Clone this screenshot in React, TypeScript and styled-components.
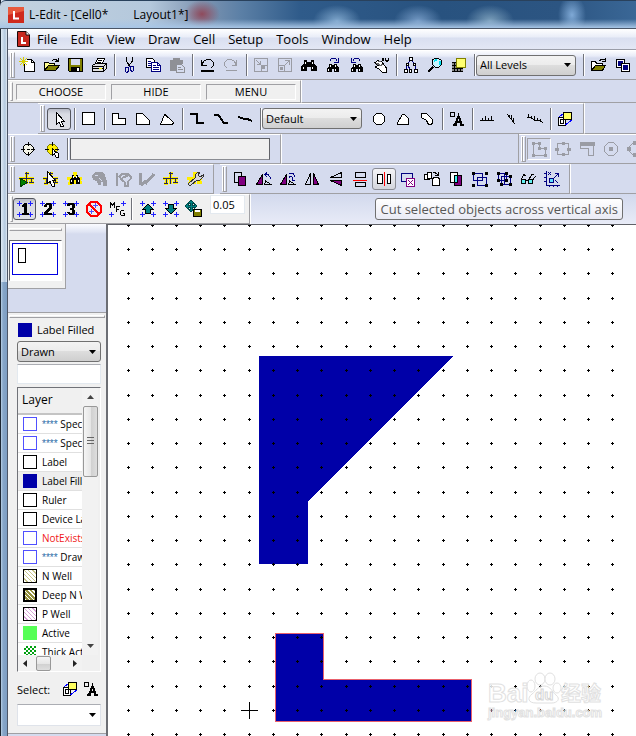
import React from "react";
import styled, { createGlobalStyle, css } from "styled-components";

const face = "#d5dbee";
const panel = "#f0f0f0";
const navy = "#0000a8";
const ui = '"Open Sans", "Noto Sans", "Noto Sans CJK SC", sans-serif';

const Global = createGlobalStyle`
  * { box-sizing: border-box; }
  body { margin: 0; background: ${face}; font-family: ${ui}; color: #000; overflow: hidden; }
  button, input, select { font: inherit; color: inherit; margin: 0; }
`;

/* ---------- icons ---------- */

type Part = [d: string, fill?: string, stroke?: string, width?: number];

const Svg = styled.svg`
  display: block;
  flex: none;
`;

const K = "#000";
const N = "none";
const G = "#9a9ca4";
const OL = "#808000";
const BL = "#000080";
const PU = "#800080";
const net: Part[] = [
  ["M1 8.5H16M8.5 2V14M4.5 8V14M13.5 8V13M7 3.5H11M2 13.5H6M11 12.5H16", N, "#ffee00", 3],
  ["M1 8.5H16M8.5 2V14M4.5 8V14M13.5 8V13M7 3.5H11M2 13.5H6M11 12.5H16", N, "#23235c", 1],
];
const plus4: Part[] = [["M1 3.5H6M3.5 1V6M12 3.5H17M14.5 1V6M1 14.5H6M3.5 12V17M12 14.5H17M14.5 12V17", N, "#2020ff", 1]];
const binoc: Part[] = [
  ["M4 4H7V6H11V4H14V7L17 11V15H11V11H7V15H1V11L4 7Z", K],
  ["M3 11H4V13H3ZM12 11H13V13H12ZM5 6H6V8H5ZM12 6H13V8H12Z", "#fff"],
];
const smallBinoc: Part[] = [
  ["M5 8H8V9H10V8H13V10L15 12V16H10V13H8V16H3V12L5 10Z", K],
  ["M4 13H5V15H4ZM11 13H12V15H11ZM6 9H7V11H6ZM11 9H12V11H11Z", "#fff"],
];
const wrench: Part = ["M4 16L2 14L9 8V5L12 2H14L12 5L14 7L17 5V7L14 10H11Z", "#d8d8d8", "#333", 1];

const icons: Record<string, Part[]> = {
  new: [
    ["M6.5 7.5V15.5H16.5V6.5L13.5 3.5H9", "#fff", K, 1],
    ["M13.5 3.5V6.5H16.5", N, K, 1],
    ["M5.5 1V10M1 5.5H10M2 2L9 9M9 2L2 9", N, "#d8d000", 1],
  ],
  open: [
    ["M2.5 14.5V6.5H6.5L7.5 7.5H12.5V9.5", "#ffff90", K, 1],
    ["M2.5 14.5L6.5 9.5H17.5L13.5 14.5Z", OL, K, 1],
    ["M10.5 4.5L12 3.5H14L16.5 5.5M13 5.5H16.5V2", N, K, 1],
  ],
  save: [
    ["M2.5 2.5H16.5V15.5H3.5L2.5 14.5Z", OL, K, 1],
    ["M5 3H14V9H5Z", "#d5dbee"],
    ["M5 11H14V16H5Z", K],
    ["M11 12H13V15H11Z", "#fff"],
  ],
  print: [
    ["M5.5 7.5L7.5 2.5H14.5L12.5 7.5Z", "#fff", K, 1],
    ["M2.5 9.5L5.5 7.5H16.5V12.5L13.5 15.5H2.5Z", "#e0e0e0", K, 1],
    ["M2.5 10.5H13.5V15M13.5 10.5L16 8M3 12.5H13M8 4.5H12M7 6.5H11", N, K, 1],
    ["M9 12H12V13H9Z", "#ffff00"],
  ],
  cut: [
    ["M6.5 1V5L9.5 10M12.5 1V5L8.5 10", N, K, 1],
    ["M5.5 11.5H8.5V15.5L6.5 16.5L5.5 15.5ZM10.5 10.5H13.5V14.5L12.5 15.5L10.5 14.5ZM8.5 10.5H10.5", N, BL, 1],
  ],
  copy: [
    ["M2.5 2.5H8.5L10.5 4.5V11.5H2.5Z", "#fff", K, 1],
    ["M7.5 6.5H13.5L16.5 9.5V15.5H7.5Z", "#fff", BL, 1],
    ["M4 5.5H7M4 7.5H7M4 9.5H7M9 9.5H12M9 11.5H15M9 13.5H15M13.5 6.5V9.5H16.5", N, BL, 1],
  ],
  paste: [
    ["M2 4H5V2H12V4H15V8H8V15H2Z", "#8f9096"],
    ["M8.5 8.5H13.5L16.5 11.5V16.5H8.5Z", face, "#8f9096", 1],
    ["M10 11.5H13M10 13.5H15M5 5.5H12", N, "#8f9096", 1],
  ],
  undo: [
    ["M3.5 9.5L5.5 5.5L8.5 3.5H12.5L15.5 6.5V9.5L12.5 12.5M3.5 4V9.5H8.5", N, K, 1],
    ["M3 14.5H16", N, K, 2],
  ],
  redo: [
    ["M14.5 9.5L12.5 5.5L9.5 3.5H5.5L2.5 6.5V9.5L5.5 12.5M14.5 4V9.5H9.5", N, G, 1],
    ["M4 14.5H15", N, G, 1],
  ],
  shrink: [
    ["M2.5 2.5H15.5V15.5H2.5ZM9.5 9.5H15.5V15.5H9.5Z", N, G, 1],
    ["M4.5 4.5L8.5 8.5M8.5 5V8.5H5", N, G, 1],
    ["M10 10H13V13H10Z", G],
  ],
  grow: [
    ["M2.5 2.5H15.5V15.5H2.5ZM2.5 9.5H8.5V15.5", N, G, 1],
    ["M8.5 9.5L13.5 4.5M9 4.5H13.5V9", N, G, 1],
    ["M4 11H7V14H4Z", G],
  ],
  find: binoc,
  findNext: [...smallBinoc, ["M5.5 5.5L7.5 2.5H11.5L13.5 5.5M10 6.5H14.5V2", N, BL, 1]],
  findPrev: [...smallBinoc, ["M12.5 5.5L10.5 2.5H6.5L4.5 5.5M8 6.5H3.5V2", N, BL, 1]],
  goto: [
    ["M3 6.5L6 4.5L10 6L14.5 12V16H10L7 13L3 11L6 9.5Z", "#fff", K, 1],
    ["M4 7H7M6 5H9M7 9H10M5 8H8M9 8H11", N, "#666", 1],
    ["M10 2L12 5M12 2L10 5M13.5 2V4H16M16 2V5L14 6", N, K, 1],
  ],
  hierarchy: [
    ["M7.5 1.5H10.5V4.5H7.5ZM4.5 7.5H6.5V9.5H4.5ZM11.5 7.5H13.5V9.5H11.5ZM2.5 13.5H5.5V16.5H2.5ZM7.5 13.5H9.5V16.5H7.5ZM12.5 13.5H15.5V16.5H12.5Z", "#fff", K, 1],
    ["M8 5L6 7M10 5L12 7M5 10L4 13M6 10L8 13M13 10L14 13", N, BL, 1],
  ],
  zoom: [
    ["M6.5 4L8.5 2.5H12.5L15.5 4.5V8.5L12.5 11.5H9.5L6.5 8.5Z", "#c8f5ff", K, 1],
    ["M8 5L11 3.5M14 9V5", N, "#00e0f0", 2],
    ["M7 11L2 16", N, K, 2],
  ],
  layers: [
    ["M2 6H13V16H2Z", "#888"],
    ["M2 6.5H6M2 9.5H6M2 12.5H13M2 15.5H13M4.5 6V16M7.5 12V16M10.5 12V16", N, K, 1],
    ["M6.5 2.5H15.5V11.5H6.5Z", "#ffff70", OL, 1],
  ],
  openCell: [
    ["M2.5 14.5V5.5H6.5L7.5 7.5H13.5V9.5", "#fff", K, 1],
    ["M2.5 14.5L6.5 9.5H16.5L13.5 14.5Z", OL, K, 1],
    ["M10.5 5L12 3.5H16M13 5.5H16.5V2", N, K, 1],
  ],
  cells: [
    ["M3.5 3.5H11.5V11.5H3.5Z", "#fff", K, 1],
    ["M5 5H10V10H5Z", BL],
    ["M8.5 7.5H16.5V15.5H8.5Z", "#fff", K, 1],
    ["M10 9H15V14H10Z", BL],
  ],
  arrow: [["M6.5 2.5V14.5L9 12L11 16.5H13V15L11.5 11.5H14.5Z", "#fff", K, 1]],
  box: [["M2.5 2.5H14.5V14.5H2.5Z", "#fff", K, 1]],
  poly90: [["M2.5 3.5H8.5V8.5H15.5V14.5H2.5Z", "#fff", K, 1]],
  poly45: [["M2.5 3.5H8.5L15.5 10.5V14.5H2.5Z", "#fff", K, 1]],
  polyAny: [["M7 4.5L15.5 12.5L14.5 14.5H2.5L6.5 4.5Z", "#fff", K, 1]],
  wire90: [["M2 4H9V13H16", N, K, 2]],
  wire45: [["M2 4.5H6L12 13H16", N, K, 2]],
  wireAny: [["M2 7L7 8.5H10L16 11", N, K, 2]],
  circle: [["M6.5 3.5H11.5L14.5 6.5V11.5L11.5 14.5H6.5L3.5 11.5V6.5Z", "#fff", K, 1]],
  pie: [["M3.5 14.5V12.5L8.5 4.5H10.5L14.5 8.5V14.5Z", "#fff", K, 1]],
  torus: [["M3.5 3.5H8.5L14.5 9.5V13.5L12.5 14.5H10.5L8.5 10.5L3.5 7.5Z", "#fff", K, 1]],
  text: [
    ["M2.5 2.5H6.5V6.5H2.5Z", N, K, 1],
    ["M5 15H9M12 15H16", N, K, 2],
    ["M7 15L10.5 6L14 15M8.5 12H13", N, K, 2],
  ],
  rulerH: [["M2 10.5H16M4.5 8V10M7.5 6V10M10.5 8V10M13.5 6V10", N, K, 1]],
  rulerD: [["M5 4L13 14M7.5 5V7.5M9.5 5V10M11.5 8V12", N, K, 1]],
  rulerA: [["M1 7.5H5L9 10.5H13L17 12.5M2.5 4V8M5.5 6V9M8.5 6V10M11.5 8V11M14.5 9V12", N, K, 1]],
  instance: [
    ["M2.5 7.5H9.5V15.5H2.5Z", "#fff", K, 1],
    ["M3 7L8 3M9 15L16 10M10 8L15 5", N, "#0000ff", 1],
    ["M4.5 9.5H7.5V13.5H4.5Z", "#fff", K, 1],
    ["M7.5 2.5H15.5V9.5H7.5Z", "#ffff60", K, 1],
  ],
  target: [
    ["M7 4H11L14 7V11L11 14H7L4 11V7Z", "#f4f4e8", K, 1],
    ["M9.5 2V6M9.5 12V16M2 9.5H6M12 9.5H16M8 9.5H11", N, K, 1],
  ],
  targetPick: [
    ["M7 4H11L14 7V11L11 14H7L4 11V7Z", "#ffee00", OL, 1],
    ["M9.5 2V6M9.5 12V15M2 9.5H6M12 9.5H16", N, K, 1],
    ["M9.5 8.5V15.5L11.5 14L13 17H15V13L13 12.5Z", "#fff", K, 1],
  ],
  snapVertex: [
    ["M3.5 3.5H9.5V8.5H15.5V15.5H3.5Z", N, G, 1],
    ["M2 2H5V5H2ZM8 2H11V5H8ZM8 7H11V10H8ZM14 7H17V10H14ZM2 14H5V17H2ZM14 14H17V17H14Z", G],
  ],
  snapEdge: [
    ["M3.5 3.5H14.5V14.5H3.5Z", N, G, 1],
    ["M8 2H11V5H8ZM1 8H5V11H1ZM13 8H17V11H13ZM8 13H11V16H8Z", G],
  ],
  snapMid: [
    ["M2 2H17V6H2Z", G],
    ["M2.5 5.5V8.5H10.5V15.5H15.5V6", N, G, 1],
  ],
  snapCenter: [
    ["M6.5 2.5H11.5L15.5 6.5V11.5L11.5 15.5H6.5L2.5 11.5V6.5Z", N, G, 1],
    ["M7 7H11V11H7Z", G],
  ],
  snapQuad: [
    ["M6.5 3.5H11.5L15.5 6.5V11.5L11.5 14.5H6.5L3.5 11.5V6.5Z", N, G, 1],
    ["M1 7H5V11H1ZM7 1H11V5H7ZM7 13H11V17H7Z", G],
  ],
  netRun: [...net, ["M2 8L9 12.5L2 17Z", "#008000", "#004000", 1]],
  netPick: [...net, ["M5.5 1.5V13.5L8 11.5L10 16H12V13L10.5 10.5H13.5Z", "#fff", K, 1]],
  netFind: [
    net[0],
    ["M6 5H8V7H10V5H12V7L14 9V14H10V10H8V14H4V9L6 7Z", K],
    ["M5 10H6V12H5ZM12 10H13V12H12ZM7 6H8V8H7ZM10 6H11V8H10Z", "#fff"],
  ],
  trace: [["M2 5L5 2H12L15 5L17 11V16H13V12H11V15H8L7 11L3 10Z", G], ["M5 5.5H8M9 8.5L12 10.5", N, face, 1]],
  idea: [["M2.5 3V16", N, G, 2], ["M5.5 6.5L8 3.5H14L16.5 6.5V9L13.5 12V15.5H10.5V12L7 9ZM8 8L15 5", N, G, 2]],
  tick: [["M2.5 3V15M3 15L8 11M7 14L16 4", N, G, 3]],
  net,
  netTool: [net[0], wrench],
  dup: [["M3.5 2.5H10.5V12.5H3.5Z", N, K, 1], ["M7.5 6.5H14.5V15.5H7.5Z", PU, K, 1]],
  rot: [["M1.5 14.5L7.5 4.5V14.5Z", PU, K, 1], ["M9.5 14.5L10.5 11L16 14.5Z", N, K, 1], ["M10 4.5H13L15.5 7.5V9M12 2.5L9.5 4.5L12 7", N, BL, 1]],
  rotAny: [["M1.5 14.5L7.5 4.5V14.5Z", PU, K, 1], ["M9.5 14.5L10.5 11L16 14.5Z", N, K, 1], ["M10 3.5H14L16 6.5M10 7.5L12 6L14 8L13 10L16 11", N, BL, 1]],
  flipH: [["M2.5 14.5L7.5 3.5V14.5Z", N, K, 1], ["M10.5 3.5L15.5 14.5H10.5Z", PU, K, 1]],
  flipV: [["M3.5 7.5L14.5 7.5V2.5Z", N, K, 1], ["M3.5 10.5H14.5V15.5Z", PU, K, 1]],
  cutH: [["M4.5 2.5H14.5V7.5H4.5ZM4.5 12.5H14.5V16.5H4.5Z", N, K, 1], ["M2 10.5H16", N, "#ff0000", 1]],
  cutV: [["M2.5 4.5H7.5V13.5H2.5ZM12.5 4.5H15.5V13.5H12.5Z", "#fff", K, 1], ["M9.5 2V16", N, "#ff0000", 1]],
  nibble: [["M2.5 3.5H13.5V11.5H2.5Z", N, BL, 1], ["M7.5 8.5H15.5V16.5H7.5Z", "#fff", PU, 1], ["M9 10L14 15M14 10L9 15", N, PU, 1]],
  replace: [
    ["M1.5 4.5H6.5V9.5H1.5Z", "#fff", K, 1],
    ["M4.5 2.5H8.5V8.5H4.5Z", "#fff", K, 1],
    ["M10.5 7.5H15.5L16.5 9.5V15.5H9.5V9.5Z", "#fff", K, 1],
    ["M10 2.5H12L15 5M15.5 2V5.5H12", N, K, 1],
  ],
  intersect: [["M3.5 2.5H10.5V12.5H3.5Z", "#fff", K, 1], ["M7.5 5.5H14.5V15.5H7.5Z", PU, K, 1], ["M7.5 5.5H10.5V12.5H7.5Z", "#40f0f0", K, 1]],
  group: [["M2.5 3.5H11.5V10.5H2.5ZM6.5 7.5H15.5V15.5H6.5Z", N, BL, 1], ["M1 2H4V5H1ZM14 2H17V5H14ZM1 14H4V17H1ZM14 14H17V17H14Z", K]],
  ungroup: [["M3.5 3.5H11.5V10.5H3.5ZM6.5 6.5H15.5V14.5H6.5ZM9.5 4V14", N, BL, 1], ["M2 2H5V5H2ZM10 2H13V5H10ZM2 9H5V12H2ZM14 5H17V8H14ZM5 13H8V16H5ZM14 13H17V16H14ZM10 9H13V12H10Z", K]],
  glasses: [["M2.5 9.5H6.5V13.5H2.5ZM9.5 9.5H13.5V13.5H9.5Z", "#60f0f0", K, 1], ["M2.5 9L5 4.5L7 6M6.5 10.5H9.5M10 9L13 4.5L15 4M13.5 10L17 6", N, K, 1]],
  axes: [["M3.5 1V15.5H17M1 3.5H3M1 7.5H3M1 11.5H3M6.5 15V17M10.5 15V17M14.5 15V17", N, BL, 1], ["M6.5 8.5H10.5V12.5H6.5Z", "#60e0ff", BL, 1], ["M11 8L15 4M12 3.5H15.5V7M5 2L8 5M8 2L5 5M12 10L15 13", N, BL, 1]],
  one: [...plus4, ["M6 5L8 4V3H11V13H13V15H6V13H8V7H6Z", K]],
  two: [...plus4, ["M5 7V5L7 3H11L13 5V8L9 13H13V15H5V13L10 7V5H8V7Z", K]],
  three: [...plus4, ["M5 6V4L7 3H11L13 5V7L12 9L13 11V13L11 15H7L5 13V12H8V13H10V10H8V8H10V5H8V6Z", K]],
  stop: [["M6 2H12L16 6V12L12 16H6L2 12V6ZM4 4L14 14", N, "#ff0000", 2], ["M4 11.5H9M6.5 9V14M8 5.5H13M10.5 3V8", N, "#5050ff", 1]],
  mfg: [["M2.5 8V2.5L4.5 5L6.5 2.5V8M8.5 12V6.5H12M8.5 9.5H11M16 10.5H13.5L12.5 12V14L13.5 15.5H16.5V13.5H15", N, K, 1], ["M1 14.5H6M3.5 12V17M13 3.5H18M15.5 1V6", N, "#2020ff", 1]],
  up: [...plus4, ["M9 4L14.5 9.5H11.5V13.5H6.5V9.5H3.5Z", "#008080", K, 1]],
  down: [...plus4, ["M9 14L14.5 8.5H11.5V4.5H6.5V8.5H3.5Z", "#008080", K, 1]],
  saveMove: [
    ["M0 6L3 3V5H5V3H3L6 0L9 3H7V5H9V3L12 6L9 9V7H7V9H9L6 12L3 9H5V7H3V9Z", "#008080", "#004848", 1],
    ["M8.5 9.5H16.5V16.5H8.5Z", OL, K, 1],
    ["M10 10H15V12H10Z", "#fff"],
  ],
};

function Icon({ name }: { name: string }) {
  return (
    <Svg width="18" height="18" viewBox="0 0 18 18" shapeRendering="crispEdges" aria-hidden="true">
      {icons[name].map(([d, fill = N, stroke = N, width = 1], i) => (
        <path key={i} d={d} fill={fill} stroke={stroke} strokeWidth={width} />
      ))}
    </Svg>
  );
}

/* ---------- window frame ---------- */

const Window = styled.div`
  display: flex;
  flex-direction: column;
  height: 100vh;
  overflow: hidden;
  padding-left: 8px;
  background:
    linear-gradient(90deg, #1d2733 0 1px, transparent 1px 7px, #4c5566 7px 8px, transparent 8px),
    linear-gradient(90deg, #dfeaf5 1px, #b3c8de 5px, #dfe9f3 7px) 0 0 / 8px 282px no-repeat,
    linear-gradient(90deg, #b9d0e6 1px, #87a6c8 3px, #7d9dc2 7px);
`;

const TitleBar = styled.header`
  display: flex;
  align-items: center;
  gap: 5px;
  height: 29px;
  flex: none;
  margin-left: -8px;
  padding-left: 8px;
  border-top: 1px solid #29415c;
  border-bottom: 1px solid #4a5566;
  border-top-left-radius: 6px;
  font-size: 12px;
  white-space: nowrap;
  background:
    linear-gradient(180deg, transparent 18px, #a8c6e6 27px),
    radial-gradient(18px 14px at 202px 13px, #8f4a5c, transparent),
    radial-gradient(24px 16px at 337px 20px, #7ea6cc, transparent),
    radial-gradient(24px 16px at 418px 20px, #7399c4, transparent),
    radial-gradient(24px 16px at 490px 20px, #7b9fbb, transparent),
    radial-gradient(14px 20px at 572px 14px, #7fa9d6, transparent),
    linear-gradient(90deg, #c3d2e0, #b4c8dc 150px, #8096b2 200px, #5c80a6 240px, #2f5b8a 300px, #28527f 440px, #2c5582 560px, #3a6796);
`;

const DocTitle = styled.span`
  margin-left: 20px;
`;

const Logo = styled.svg`
  flex: none;
  display: block;
`;

const MenuBar = styled.nav`
  display: flex;
  align-items: center;
  gap: 1px;
  height: 21px;
  flex: none;
  padding-left: 9px;
  background: linear-gradient(180deg, #fff, #e9edf8 8px, #d9dff0 9px, #e3e7f5);
  border-bottom: 1px solid #9a9da8;
`;

const MenuItem = styled.button`
  padding: 0 6px;
  border: 0;
  background: none;
  font-size: 13px;
  line-height: 18px;
`;

/* ---------- toolbars ---------- */

const BarRow = styled.div<{ $h: number; $glossy?: boolean }>`
  display: flex;
  flex: none;
  height: ${(p) => p.$h}px;
  overflow: hidden;
  background: ${(p) => (p.$glossy ? `linear-gradient(180deg, #fff, #e8ecf8 6px, ${face} 8px)` : face)};
`;

const Bar = styled.div<{ $plain?: boolean; $pad?: number; $open?: boolean; $offset?: number; $clip?: number }>`
  display: flex;
  align-items: center;
  flex: ${(p) => (p.$open ? "1 1 auto" : "none")};
  min-width: 0;
  width: ${(p) => (p.$clip ? `${p.$clip}px` : "auto")};
  padding-right: ${(p) => p.$pad ?? 0}px;
  margin-left: ${(p) => p.$offset ?? 0}px;
  background: ${(p) => (p.$plain ? panel : "transparent")};
  border-top: 1px solid #fff;
  border-bottom: 1px solid #a0a0a4;
  border-right: ${(p) => (p.$open || p.$clip ? "0" : "1px solid #a0a0a4")};
`;

const Rest = styled.div<{ $glossy?: boolean; $ruled?: boolean }>`
  flex: 1;
  display: flex;
  min-width: 0;
  border-left: 1px solid #fff;
  border-right: ${(p) => (p.$ruled ? "1px solid #a0a0a4" : "0")};
  background: ${(p) => (p.$glossy ? "linear-gradient(180deg, #d2d9ed, #e8ebf7)" : "transparent")};
  border-bottom: ${(p) => (p.$glossy ? "0" : "1px solid #a0a0a4")};
`;

const Grip = styled.span<{ $single?: boolean }>`
  flex: none;
  align-self: stretch;
  margin: 1px 0 1px 2px;
  width: ${(p) => (p.$single ? 3 : 5)}px;
  border: 1px solid #a0a0a4;
  border-left-color: #fff;
  border-top-color: #fff;
  ${(p) => !p.$single && css`
    background: linear-gradient(90deg, #a0a0a4 0 1px, #fff 1px 2px, transparent 2px);
  `}
`;

const Tool = styled.button<{ $state?: "pressed" | "hot" | "sunken"; $w?: number }>`
  display: flex;
  align-items: center;
  justify-content: center;
  flex: none;
  width: ${(p) => p.$w ?? 24}px;
  height: 22px;
  padding: 0;
  border: 1px solid transparent;
  border-radius: 3px;
  background: none;
  ${(p) => p.$state === "pressed" && css`
    border-color: #54565e;
    background: linear-gradient(180deg, #b9bcc8, #d8dae2 5px, #e0e1e6);
  `}
  ${(p) => p.$state === "hot" && css`
    border-color: #8a8c94;
    background: linear-gradient(180deg, #f4f4f6, #e4e5ea 10px, #d3d5dc);
  `}
  ${(p) => p.$state === "sunken" && css`
    border-radius: 0;
    border-color: #a0a0a4 #fff #fff #a0a0a4;
  `}
`;

const Sep = styled.span<{ $w?: number }>`
  flex: none;
  width: ${(p) => p.$w ?? 6}px;
  height: 22px;
  background: linear-gradient(#70727a, #70727a) 3px 0 / 1px 100% no-repeat,
    linear-gradient(#fff, #fff) 4px 0 / 1px 100% no-repeat;
`;

const Gap = styled.span<{ $w: number }>`
  flex: none;
  width: ${(p) => p.$w}px;
`;

const Caption = styled.button`
  flex: none;
  width: 90px;
  height: 16px;
  margin-left: 5px;
  padding: 0;
  font-size: 11px;
  line-height: 14px;
  background: ${panel};
  border: 1px solid;
  border-color: #a0a0a4 #fff #fff #a0a0a4;
  &:first-of-type { margin-left: 3px; }
`;

const Combo = styled.select<{ $wide?: boolean }>`
  appearance: none;
  flex: none;
  width: ${(p) => (p.$wide ? "auto" : "100px")};
  height: 21px;
  padding: 0 18px 0 3px;
  font-size: 11px;
  line-height: 18px;
  border: 1px solid #707070;
  border-radius: 3px;
  background: linear-gradient(180deg, #f3f3f3, #ebebeb 50%, #dddddd 50%, #cfcfcf);
`;

const ComboBox = styled.span`
  display: grid;
  flex: none;
  > * { grid-area: 1 / 1; }
  > svg { align-self: center; justify-self: end; margin-right: 5px; pointer-events: none; }
`;

function Select({ label, value, wide }: { label: string; value: string; wide?: boolean }) {
  return (
    <ComboBox>
      <Combo aria-label={label} defaultValue={value} $wide={wide}>
        <option>{value}</option>
      </Combo>
      <DownArrow />
    </ComboBox>
  );
}

function DownArrow() {
  return (
    <svg width="7" height="4" viewBox="0 0 7 4" aria-hidden="true">
      <path d="M0 0H7L3.5 4Z" fill="#000" />
    </svg>
  );
}

const CoordField = styled.input`
  flex: none;
  width: 200px;
  height: 22px;
  border: 1px solid #606268;
  border-bottom-color: #8a8c92;
  background: ${panel};
`;

const StepField = styled.input`
  flex: none;
  align-self: flex-start;
  width: 35px;
  height: 19px;
  padding: 0 2px;
  font-size: 11px;
  border: 1px solid #e3e9ef;
  background: #fff;
`;

const Tip = styled.div`
  margin: 4px 13px 0 auto;
  height: 22px;
  padding: 0 4px;
  border: 1px solid #707070;
  border-radius: 3px;
  background: linear-gradient(180deg, #fff, #e9eaf4);
  color: #575757;
  font-size: 13px;
  line-height: 20px;
  white-space: nowrap;
`;

function Tools({ names, w, hot }: { names: string[]; w?: number; hot?: string }) {
  return (
    <>
      {names.map((n) => (
        <Tool key={n} aria-label={n} $w={w} $state={n === hot ? "hot" : undefined}>
          <Icon name={n} />
        </Tool>
      ))}
    </>
  );
}

/* ---------- work area ---------- */

const Work = styled.main`
  display: flex;
  flex: 1;
  min-height: 0;
`;

const Dock = styled.aside`
  display: flex;
  flex-direction: column;
  flex: none;
  width: 98px;
  background: linear-gradient(180deg, #fafbff, #dfe4f3 8px, ${face} 10px);
`;

const DockGrip = styled.div`
  flex: none;
  height: 3px;
  border: 1px solid;
  border-color: #fff #a0a0a4 #a0a0a4 #fff;
`;

const Overview = styled.section`
  flex: none;
  width: 58px;
  height: 65px;
  padding: 4px 3px 0 1px;
  background: ${panel};
  border: 1px solid #a0a0a4;
  border-top: 0;
  border-left: 0;
`;

const Preview = styled.div`
  margin: 9px 0 0 0;
  height: 41px;
  padding: 2px;
  background: #fff;
  border: 1px solid;
  border-color: #606268 #fff #fff #606268;
`;

const Layers = styled.section`
  display: flex;
  flex-direction: column;
  flex: 1;
  min-height: 0;
  margin: 23px 0 2px;
  padding: 2px 5px 7px 9px;
  background: ${panel};
  border-top: 1px solid #a0a0a4;
  border-bottom: 1px solid #a0a0a4;
`;

const LayerGrip = styled(DockGrip)`
  margin: 0 -4px 0 -8px;
`;

const Current = styled.div`
  display: flex;
  align-items: center;
  gap: 5px;
  height: 21px;
  flex: none;
  margin: 1px 0 1px 1px;
  font-size: 11px;
  white-space: nowrap;
`;

const Swatch = styled.span<{ $border: string; $fill: string; $bold?: boolean }>`
  display: block;
  flex: none;
  width: 14px;
  height: 14px;
  border: ${(p) => (p.$bold ? 2 : 1)}px solid ${(p) => p.$border};
  background: ${(p) => p.$fill};
`;

const Filter = styled.input`
  flex: none;
  width: 100%;
  height: 20px;
  margin: 2px 0 3px;
  border: 1px solid #e3e9ef;
  border-top-color: #abadb3;
  background: #fff;
`;

const ListBox = styled.div`
  display: grid;
  grid-template: minmax(0, 1fr) 16px / minmax(0, 1fr) 16px;
  flex: 1;
  min-height: 0;
  padding-right: 2px;
  border: 1px solid;
  border-color: #707278 #fff #fff #707278;
  background: ${panel};
`;

const ListClip = styled.div`
  overflow: hidden;
`;

const Table = styled.table`
  width: 100%;
  border-collapse: collapse;
  table-layout: fixed;
`;

const Head = styled.th`
  height: 26px;
  padding: 0 4px 2px;
  text-align: left;
  font-size: 12px;
  font-weight: 400;
  border-bottom: 2px solid #c4c4c4;
`;

const Row = styled.tr<{ $on?: boolean }>`
  height: 19px;
  background: ${(p) => (p.$on ? "#eee" : "#fff")};
`;

const Cell = styled.td<{ $red?: boolean }>`
  padding: 0 0 0 5px;
  border-bottom: 1px solid #e0e0e0;
  color: ${(p) => (p.$red ? "#f01818" : "#000")};
`;

const CellRow = styled.div`
  display: flex;
  align-items: center;
  gap: 5px;
  height: 18px;
  font-size: 10px;
  line-height: 16px;
  white-space: nowrap;
  overflow: hidden;
`;

const Stars = styled.span`
  color: #2d6ea8;
  font-family: "Liberation Sans", Arial, sans-serif;
`;

const Scroll = styled.div<{ $across?: boolean }>`
  display: flex;
  flex-direction: ${(p) => (p.$across ? "row" : "column")};
  align-items: center;
  padding: ${(p) => (p.$across ? "0 5px" : "7px 0")};
  background: #f2f2f2;
`;

const Thumb = styled.span<{ $across?: boolean }>`
  display: flex;
  align-items: center;
  justify-content: center;
  border: 1px solid #989898;
  border-radius: 2px;
  ${(p) => p.$across
    ? css`width: 15px; height: 15px; margin: 0 auto 0 9px; background: linear-gradient(180deg, #f5f5f5, #e6e6e6 50%, #cfcfcf 50%, #dedede);`
    : css`width: 15px; height: 71px; margin: 7px 0 auto; background: linear-gradient(90deg, #f5f5f5, #e6e6e6 50%, #cfcfcf 50%, #dedede);`}
`;

const Pick = styled.div`
  display: flex;
  align-items: center;
  flex: none;
  height: 32px;
  padding-top: 2px;
  font-size: 11px;
`;

const PickLabel = styled.span`
  margin-right: auto;
`;

const PickSelect = styled.select`
  appearance: none;
  width: 100%;
  height: 22px;
  border: 1px solid #dfe3ea;
  border-top-color: #abadb3;
  background: #fff;
`;

const Canvas = styled.div`
  flex: 1;
  min-width: 0;
  background: #fff;
  border-left: 2px solid #6c6e74;
  border-top: 1px solid #606268;
`;

const Drawing = styled.svg`
  display: block;
  width: 100%;
  height: 100%;
`;

const PITCH = 97 / 4;
const dots = Array.from({ length: 45 }, (_, r) =>
  Array.from({ length: 80 }, (_, c) => {
    const x = Math.floor(20 - 1 / 4 + c * PITCH) + (c % 4 === 0 ? 1 : 0) * (c === 0 ? 1 : 0);
    const y = Math.round(-1 / 4 + r * PITCH);
    return `M${x - 1} ${y}h3v1h-3zM${x} ${y - 1}h1v3h-1z`;
  }).join("")
).join("");

const lNWell = "repeating-linear-gradient(45deg, #fff 0 2px, #c9c68a 2px 3px)";
const lDeep = "repeating-linear-gradient(45deg, #fff 0 1px, #94903c 1px 3px)";
const lPWell = "repeating-linear-gradient(45deg, #fff 0 2px, #d9a3d9 2px 3px)";
const lThick = "repeating-conic-gradient(#00a010 0 25%, #fff 0 50%) 0 0 / 4px 4px";

const layers: { name: string; border: string; fill: string; stars?: boolean; on?: boolean; red?: boolean; bold?: boolean }[] = [
  { name: "Special", border: "#5050ff", fill: "#fff", stars: true },
  { name: "Special", border: "#5050ff", fill: "#fff", stars: true },
  { name: "Label", border: "#000", fill: "#fff" },
  { name: "Label Filled", border: navy, fill: navy, on: true },
  { name: "Ruler", border: "#000", fill: "#fff" },
  { name: "Device Label", border: "#000", fill: "#fff" },
  { name: "NotExists", border: "#5050ff", fill: "#fff", red: true },
  { name: "Drawn", border: "#5050ff", fill: "#fff", stars: true },
  { name: "N Well", border: "#000", fill: lNWell },
  { name: "Deep N Well", border: "#000", fill: lDeep, bold: true },
  { name: "P Well", border: "#000", fill: lPWell },
  { name: "Active", border: "#55ff55", fill: "#55ff55" },
  { name: "Thick Active", border: "#fff", fill: lThick },
];

const menus = ["File", "Edit", "View", "Draw", "Cell", "Setup", "Tools", "Window", "Help"];

export default function App() {
  return (
    <>
      <Global />
      <Window>
        <TitleBar>
          <Logo width="16" height="16" viewBox="0 0 16 16" aria-hidden="true">
            <path d="M0 0H16V16H0Z" fill="#cf2a1c" />
            <path d="M0 0H16V4L0 8Z" fill="#e8593c" />
            <path d="M6 4V11.5H11" fill="none" stroke="#fff" strokeWidth="2" />
          </Logo>
          <span>L-Edit - [Cell0*</span>
          <DocTitle>Layout1*]</DocTitle>
        </TitleBar>

        <MenuBar>
          <Logo width="13" height="16" viewBox="0 0 13 16" aria-hidden="true">
            <path d="M0.5 0.5H9L12.5 4V15.5H0.5Z" fill="#c8281e" stroke="#1a0808" />
            <path d="M9 0.5V4H12.5" fill="#fff" stroke="#1a0808" />
            <path d="M5 6V12H9" fill="none" stroke="#fff" strokeWidth="2" />
          </Logo>
          {menus.map((m) => (
            <MenuItem key={m}>{m}</MenuItem>
          ))}
        </MenuBar>

        <BarRow $h={30} $glossy>
          <Bar $open>
            <Grip />
            <Tools names={["new", "open", "save", "print"]} />
            <Sep />
            <Tools names={["cut", "copy", "paste"]} />
            <Sep />
            <Tools names={["undo", "redo"]} />
            <Sep />
            <Tools names={["shrink", "grow", "find", "findNext", "findPrev", "goto"]} />
            <Sep />
            <Tools names={["hierarchy", "zoom", "layers"]} />
            <Sep $w={5} />
            <Select label="Hierarchy levels" value="All Levels" />
            <Gap $w={4} />
            <Sep />
            <Tools names={["openCell", "cells"]} />
          </Bar>
        </BarRow>

        <BarRow $h={23}>
          <Bar $plain $pad={4}>
            <Grip $single />
            <Caption>CHOOSE</Caption>
            <Caption>HIDE</Caption>
            <Caption>MENU</Caption>
          </Bar>
          <Rest />
        </BarRow>

        <BarRow $h={31}>
          <Bar $offset={30} $pad={6}>
            <Grip />
            <Gap $w={2} />
            <Tool aria-label="Select" $state="pressed">
              <Icon name="arrow" />
            </Tool>
            <Sep />
            <Tools names={["box"]} />
            <Sep />
            <Tools names={["poly90", "poly45", "polyAny"]} />
            <Sep />
            <Tools names={["wire90", "wire45", "wireAny"]} />
            <Sep $w={5} />
            <Select label="Wire style" value="Default" />
            <Gap $w={5} />
            <Tools names={["circle", "pie", "torus"]} />
            <Sep />
            <Tools names={["text"]} />
            <Sep />
            <Tools names={["rulerH", "rulerD", "rulerA"]} />
            <Sep />
            <Tools names={["instance"]} />
          </Bar>
          <Rest />
        </BarRow>

        <BarRow $h={30}>
          <Bar $pad={10}>
            <Grip />
            <Gap $w={1} />
            <Tools names={["target", "targetPick"]} />
            <Sep />
            <CoordField aria-label="Coordinates" />
          </Bar>
          <Rest $ruled />
          <Bar $clip={117}>
            <Grip />
            <Gap $w={1} />
            <Tool aria-label="snapVertex" $state="sunken">
              <Icon name="snapVertex" />
            </Tool>
            <Tools names={["snapEdge", "snapMid", "snapCenter", "snapQuad"]} />
          </Bar>
        </BarRow>

        <BarRow $h={30}>
          <Bar $pad={6}>
            <Grip />
            <Tools names={["netRun", "netPick", "netFind", "trace", "idea", "tick", "net", "netTool"]} />
          </Bar>
          <Bar $offset={6} $pad={5}>
            <Grip />
            <Gap $w={1} />
            <Tools
              hot="cutV"
              names={["dup", "rot", "rotAny", "flipH", "flipV", "cutH", "cutV", "nibble", "replace", "intersect", "group", "ungroup", "glasses", "axes"]}
            />
          </Bar>
          <Rest />
        </BarRow>

        <BarRow $h={30}>
          <Bar $plain $pad={4}>
            <Grip $single />
            <Tool aria-label="one" $w={23} $state="pressed">
              <Icon name="one" />
            </Tool>
            <Tools w={23} names={["two", "three", "stop", "mfg"]} />
            <Sep $w={8} />
            <Tools w={23} names={["up", "down", "saveMove"]} />
            <Gap $w={5} />
            <StepField aria-label="Nudge amount" defaultValue="0.05" />
          </Bar>
          <Rest $glossy>
            <Tip role="tooltip">Cut selected objects across vertical axis</Tip>
          </Rest>
        </BarRow>

        <Work>
          <Dock>
            <Overview>
              <DockGrip />
              <Preview>
                <svg width="48" height="34" viewBox="0 0 48 34" shapeRendering="crispEdges" aria-hidden="true">
                  <path d="M0.5 0.5H45.5V31.5H0.5Z" fill="#fff" stroke="#0000e0" />
                  <path d="M6.5 5.5H13.5V19.5H6.5Z" fill="none" stroke="#000" />
                </svg>
              </Preview>
            </Overview>
            <Layers>
              <LayerGrip />
              <Current>
                <Swatch $border={navy} $fill={navy} />
                Label Filled
              </Current>
              <Select label="Layer set" value="Drawn" wide />
              <Filter aria-label="Filter layers" />
              <ListBox>
                <ListClip>
                  <Table>
                    <thead>
                      <tr>
                        <Head scope="col">Layer</Head>
                      </tr>
                    </thead>
                    <tbody>
                      {layers.map((l, i) => (
                        <Row key={i} $on={l.on}>
                          <Cell $red={l.red}>
                            <CellRow>
                              <Swatch $border={l.border} $fill={l.fill} $bold={l.bold} />
                              <span>
                                {l.stars && <Stars>**** </Stars>}
                                {l.name}
                              </span>
                            </CellRow>
                          </Cell>
                        </Row>
                      ))}
                    </tbody>
                  </Table>
                </ListClip>
                <Scroll>
                  <svg width="7" height="4" viewBox="0 0 7 4" aria-hidden="true">
                    <path d="M0 4H7L3.5 0Z" fill="#444" />
                  </svg>
                  <Thumb>
                    <svg width="7" height="9" viewBox="0 0 7 9" shapeRendering="crispEdges" aria-hidden="true">
                      <path d="M0 0.5H7M0 3.5H7M0 6.5H7" stroke="#666" />
                    </svg>
                  </Thumb>
                  <svg width="7" height="4" viewBox="0 0 7 4" aria-hidden="true">
                    <path d="M0 0H7L3.5 4Z" fill="#444" />
                  </svg>
                </Scroll>
                <Scroll $across>
                  <svg width="4" height="7" viewBox="0 0 4 7" aria-hidden="true">
                    <path d="M4 0V7L0 3.5Z" fill="#222" />
                  </svg>
                  <Thumb $across />
                  <svg width="4" height="7" viewBox="0 0 4 7" aria-hidden="true">
                    <path d="M0 0V7L4 3.5Z" fill="#222" />
                  </svg>
                </Scroll>
              </ListBox>
              <Pick>
                <PickLabel>Select:</PickLabel>
                <Tools w={21} names={["instance", "text"]} />
              </Pick>
              <ComboBox>
                <PickSelect aria-label="Select by name" />
                <DownArrow />
              </ComboBox>
            </Layers>
          </Dock>

          <Canvas>
            <Drawing role="img" aria-label="Layout drawing">
              <g shapeRendering="crispEdges">
                <path d="M151 131H345L200 276V339H151Z" fill={navy} />
                <path d="M167.5 408.5H215.5V454.5H363.5V496.5H167.5Z" fill={navy} stroke="#e8606c" />
                <path d={dots} fill="#000" />
                <path d="M133 485.5H150M141.5 477V494" stroke="#000" fill="none" />
              </g>
              <g fill="#fff" stroke="#dcdcdc" opacity="0.85">
                <ellipse cx="423" cy="461" rx="4" ry="6" />
                <ellipse cx="432" cy="454" rx="5" ry="6" />
                <ellipse cx="442" cy="454" rx="5" ry="6" />
                <ellipse cx="449" cy="463" rx="4" ry="5" />
                <path d="M436 461C443 461 444 467 448 470C453 474 449 478 444 478H428C420 478 419 473 424 469C428 466 430 461 436 461Z" />
                <g fontFamily='"Liberation Sans", "Noto Sans CJK SC", sans-serif' fontWeight="700">
                  <text x="380" y="477" fontSize="26">Bai</text>
                  <text x="427" y="475" fontSize="15" stroke="#cfcfcf">du</text>
                  <text x="453" y="476" fontSize="20" fontFamily='"Noto Sans CJK SC", sans-serif'>经验</text>
                  <text x="380" y="492" fontSize="13">jingyan.baidu.com</text>
                </g>
              </g>
            </Drawing>
          </Canvas>
        </Work>
      </Window>
    </>
  );
}
